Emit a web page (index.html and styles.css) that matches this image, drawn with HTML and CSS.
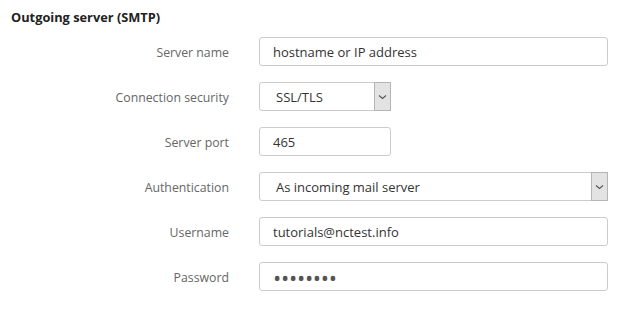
FILE: index.html
```html
<!doctype html>
<html lang="en">
  <head>
    <meta charset="UTF-8" />
    <title>Outgoing server (SMTP)</title>
    <link rel="stylesheet" href="styles.css">
  </head>
  <body>
    <div class="settings">
      <h3 class="settings-title">Outgoing server (SMTP)</h3>

      <div class="form-rows">
        <label class="row-label" for="smtpHost">Server name</label>
        <input class="field field-wide" type="text" id="smtpHost" placeholder="hostname or IP address" />

        <label class="row-label" for="smtpSecurity">Connection security</label>
        <span class="select-wrap select-short">
          <select class="field" id="smtpSecurity">
            <option>SSL/TLS</option>
            <option>STARTTLS</option>
            <option>None</option>
          </select>
          <span class="select-arrow"><svg width="9" height="6" viewBox="0 0 9 6"><path d="M1 1.5 L4.5 4.5 L8 1.5" fill="none" stroke="#555" stroke-width="1.1"/></svg></span>
        </span>

        <label class="row-label" for="smtpPort">Server port</label>
        <input class="field field-short" type="text" id="smtpPort" value="465" />

        <label class="row-label" for="smtpAuth">Authentication</label>
        <span class="select-wrap field-wide">
          <select class="field" id="smtpAuth">
            <option>As incoming mail server</option>
            <option>None</option>
            <option>Custom</option>
          </select>
          <span class="select-arrow"><svg width="9" height="6" viewBox="0 0 9 6"><path d="M1 1.5 L4.5 4.5 L8 1.5" fill="none" stroke="#555" stroke-width="1.1"/></svg></span>
        </span>

        <label class="row-label" for="smtpUser">Username</label>
        <input class="field field-wide" type="text" id="smtpUser" value="tutorials@nctest.info" />

        <label class="row-label" for="smtpPass">Password</label>
        <input class="field field-wide field-pass" type="password" id="smtpPass" value="secret12" />
      </div>
    </div>
  </body>
</html>
```

FILE: styles.css
```css
body {
  margin: 0;
  font-family: "Open Sans", "Noto Sans", Arial, sans-serif;
  font-size: 13px;
  color: #333;
  background: #fff;
}
.settings {
  padding: 9px 0 0 11px;
}
.settings-title {
  margin: 0;
  font-size: 12.8px;
  font-weight: bold;
  color: #222;
  line-height: 17px;
}
.form-rows {
  display: grid;
  grid-template-columns: 218px auto;
  column-gap: 30px;
  row-gap: 16px;
  margin-top: 11px;
  align-items: center;
  justify-items: start;
}
.row-label {
  justify-self: end;
  padding-top: 2px;
  font-size: 12.3px;
  color: #666;
}
.field {
  box-sizing: border-box;
  height: 29px;
  margin: 0;
  padding: 0 13px;
  border: 1px solid #ccc;
  border-radius: 3px;
  background: #fff;
  font-family: inherit;
  font-size: 13px;
  color: #333;
  outline: none;
}
.field::placeholder {
  color: #333;
  opacity: 1;
}
.field-wide {
  width: 349px;
}
.field-short,
.select-short {
  width: 132px;
}
.field-pass {
  font-size: 22px;
  letter-spacing: -0.3px;
  color: #555;
}
.select-wrap {
  position: relative;
  display: block;
}
.select-wrap select {
  width: 100%;
  appearance: none;
  padding-left: 16px;
}
.select-arrow {
  position: absolute;
  top: 0;
  right: 0;
  width: 17px;
  height: 29px;
  box-sizing: border-box;
  border: 1px solid #b5b5b5;
  background: #e3e3e3;
  display: flex;
  align-items: center;
  justify-content: center;
  pointer-events: none;
}
```
